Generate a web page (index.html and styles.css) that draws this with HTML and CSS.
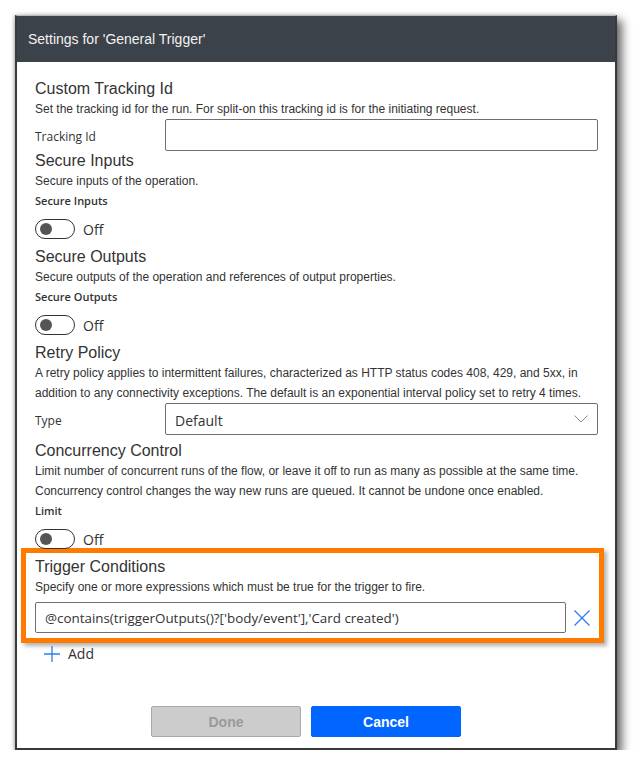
FILE: index.html
```html
<!DOCTYPE html>
<html lang="en">
<head>
    <meta charset="UTF-8">
    <meta name="viewport" content="width=device-width, initial-scale=1.0">
    <title>Settings for 'General Trigger'</title>
<link rel="stylesheet" href="styles.css">
</head>
<body>

  <div class="dialog">
    <div class="dialog-head">Settings for 'General Trigger'</div>

    <div class="dialog-body">

      <div class="section">
        <div class="heading">Custom Tracking Id</div>
        <div class="desc">Set the tracking id for the run. For split-on this tracking id is for the initiating request.</div>
        <div class="field-row">
          <label class="field-label">Tracking Id</label>
          <div class="textbox"></div>
        </div>
      </div>

      <div class="section">
        <div class="heading">Secure Inputs</div>
        <div class="desc">Secure inputs of the operation.</div>
        <div class="bold-label">Secure Inputs</div>
        <div class="toggle-row">
          <span class="toggle"><span class="knob"></span></span>
          <span class="toggle-text">Off</span>
        </div>
      </div>

      <div class="section">
        <div class="heading">Secure Outputs</div>
        <div class="desc">Secure outputs of the operation and references of output properties.</div>
        <div class="bold-label">Secure Outputs</div>
        <div class="toggle-row">
          <span class="toggle"><span class="knob"></span></span>
          <span class="toggle-text">Off</span>
        </div>
      </div>

      <div class="section">
        <div class="heading">Retry Policy</div>
        <div class="desc">A retry policy applies to intermittent failures, characterized as HTTP status codes 408, 429, and 5xx, in addition to any connectivity exceptions. The default is an exponential interval policy set to retry 4 times.</div>
        <div class="field-row type-row">
          <label class="field-label">Type</label>
          <div class="textbox select">
            <span>Default</span>
            <svg width="14" height="8" viewBox="0 0 14 8"><path d="M0.5 0.5 L7 7 L13.5 0.5" fill="none" stroke="#8a8a8a" stroke-width="1"/></svg>
          </div>
        </div>
      </div>

      <div class="section">
        <div class="heading">Concurrency Control</div>
        <div class="desc">Limit number of concurrent runs of the flow, or leave it off to run as many as possible at the same time. Concurrency control changes the way new runs are queued. It cannot be undone once enabled.</div>
        <div class="bold-label">Limit</div>
        <div class="toggle-row last">
          <span class="toggle"><span class="knob"></span></span>
          <span class="toggle-text">Off</span>
        </div>
      </div>

      <div class="conditions">
        <div class="heading">Trigger Conditions</div>
        <div class="desc">Specify one or more expressions which must be true for the trigger to fire.</div>
        <div class="cond-row">
          <div class="textbox expr">@contains(triggerOutputs()?['body/event'],'Card created')</div>
          <svg class="remove" width="16" height="16" viewBox="0 0 16 16"><path d="M0.5 0.5 L15.5 15.5 M15.5 0.5 L0.5 15.5" stroke="#2b7de9" stroke-width="1.3"/></svg>
        </div>
      </div>

      <div class="add-row">
        <svg width="16" height="16" viewBox="0 0 16 16"><path d="M8 0 V16 M0 8 H16" stroke="#2b7de9" stroke-width="1.3"/></svg>
        <span>Add</span>
      </div>
    </div>

    <div class="dialog-foot">
      <button class="btn done">Done</button>
      <button class="btn cancel">Cancel</button>
    </div>
  </div>

</body>
</html>
```

FILE: styles.css
```css
body {
  margin: 0;
  padding: 0;
  background: #fff;
  font-family: "Liberation Sans", Arial, sans-serif;
  color: #333;
}

.dialog {
  box-sizing: border-box;
  margin: 15px 0 0 15px;
  width: 602px;
  height: 735px;
  background: #fff;
  border: 2px solid #3a3a3a;
  border-top: 1px solid #bbb;
  box-shadow: 5px 5px 9px rgba(0,0,0,.6), -1px 0 3px rgba(0,0,0,.25);
  display: flex;
  flex-direction: column;
}

.dialog-head {
  height: 46px;
  line-height: 47px;
  background: #3c4249;
  color: #f2f2f2;
  font-size: 14px;
  padding-left: 11px;
}

.dialog-body {
  padding: 17px 17px 0 18px;
}

.heading {
  font-size: 16px;
  line-height: 20px;
  color: #333;
}

.desc {
  font-size: 12px;
  line-height: 20px;
  color: #333;
}

.field-row {
  display: flex;
  align-items: center;
}

.type-row {
  margin-bottom: 6px;
}

.field-label {
  width: 130px;
  font-family: "Open Sans", sans-serif;
  font-size: 12px;
  color: #333;
  padding-top: 2px;
}

.textbox {
  flex: 1;
  box-sizing: border-box;
  height: 32px;
  border: 1px solid #6f6f6f;
  border-radius: 2px;
  background: #fff;
}

.select {
  display: flex;
  align-items: center;
  justify-content: space-between;
  padding: 2px 9px 0 9px;
  font-family: "Open Sans", sans-serif;
  font-size: 14px;
  color: #333;
}

.select svg {
  margin-top: -2px;
}

.bold-label {
  font-family: "Open Sans", sans-serif;
  font-weight: 600;
  font-size: 11px;
  line-height: 20px;
  color: #333;
}

.toggle-row {
  display: flex;
  align-items: center;
  gap: 8px;
  padding: 8px 0;
}

.toggle-row.last {
  padding-bottom: 0;
}

.toggle {
  box-sizing: border-box;
  width: 40px;
  height: 20px;
  border: 1px solid #333;
  border-radius: 10px;
  display: flex;
  align-items: center;
  padding-left: 4px;
}

.knob {
  width: 12px;
  height: 12px;
  border-radius: 50%;
  background: #555;
}

.toggle-text {
  font-family: "Open Sans", sans-serif;
  font-size: 14px;
  color: #333;
}

.conditions {
  margin: -1px -6px 0 -14px;
  border: 5px solid #ff7b00;
  padding: 4px 9px 5px 9px;
  box-shadow: 3px 3px 4px rgba(0,0,0,.3);
}

.cond-row {
  display: flex;
  align-items: center;
  margin-top: 5px;
}

.expr {
  height: 31px;
  line-height: 31px;
  padding-left: 9px;
  font-family: "Open Sans", sans-serif;
  font-size: 13.4px;
  color: #333;
}

.remove {
  margin-left: 8px;
}

.add-row {
  display: flex;
  align-items: center;
  gap: 8px;
  padding: 1px 0 0 9px;
  font-family: "Open Sans", sans-serif;
  font-size: 14px;
  color: #333;
}

.dialog-foot {
  margin-top: auto;
  display: flex;
  gap: 10px;
  padding: 0 0 11px 134px;
}

.btn {
  width: 150px;
  height: 31px;
  box-sizing: border-box;
  font-family: "Liberation Sans", Arial, sans-serif;
  font-weight: bold;
  font-size: 14px;
  border-radius: 2px;
}

.done {
  background: #cccccc;
  border: 1px solid #a9a9a9;
  color: #9a9a9a;
}

.cancel {
  background: #0066ff;
  border: 1px solid #0066ff;
  color: #fff;
}
```
